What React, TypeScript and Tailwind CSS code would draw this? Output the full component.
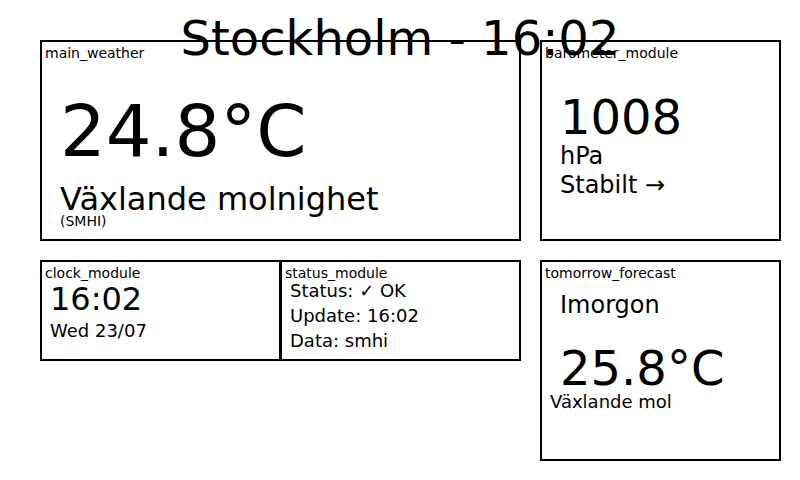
const font = "font-['DejaVu_Sans',sans-serif]";

const Label = ({ text }: { text: string }) => (
  <div className="ml-[3px] mt-[4px] text-[14px] leading-none">{text}</div>
);

const App = () => {
  return (
    <div className={`relative w-[800px] h-[480px] bg-white text-black overflow-hidden ${font}`}>
      {/* title sits on top of the module frames */}
      <div className="absolute left-0 right-0 top-[14px] text-center text-[48px] leading-none whitespace-nowrap z-10">
        Stockholm - 16:02
      </div>

      <div className="flex pt-[40px] pl-[40px] gap-[19px]">
        {/* left column */}
        <div className="flex flex-col gap-[19px]">
          <div className="w-[481px] h-[201px] border-2 border-black flex flex-col items-start">
            <Label text="main_weather" />
            <div className="ml-[18px] mt-[35px] text-[72px] leading-none">24.8°C</div>
            <div className="ml-[18px] mt-[16px] text-[32px] leading-none">Växlande molnighet</div>
            <div className="ml-[18px] -mt-[1px] text-[14px] leading-none">(SMHI)</div>
          </div>

          <div className="flex">
            <div className="w-[241px] h-[101px] border-2 border-black flex flex-col items-start">
              <Label text="clock_module" />
              <div className="ml-[8px] mt-[3px] text-[32px] leading-none">16:02</div>
              <div className="ml-[8px] mt-[7px] text-[18px] leading-none">Wed 23/07</div>
            </div>
            <div className="-ml-px w-[241px] h-[101px] border-2 border-black flex flex-col items-start">
              <Label text="status_module" />
              <div className="ml-[8px] mt-[2px] text-[18px] leading-none">Status: ✓ OK</div>
              <div className="ml-[8px] mt-[7px] text-[18px] leading-none">Update: 16:02</div>
              <div className="ml-[8px] mt-[7px] text-[18px] leading-none">Data: smhi</div>
            </div>
          </div>
        </div>

        {/* right column */}
        <div className="flex flex-col gap-[19px]">
          <div className="w-[241px] h-[201px] border-2 border-black flex flex-col items-start">
            <Label text="barometer_module" />
            <div className="ml-[18px] mt-[33px] text-[48px] leading-none">1008</div>
            <div className="ml-[18px] mt-[3px] text-[24px] leading-none">hPa</div>
            <div className="ml-[18px] mt-[5px] text-[24px] leading-none">Stabilt →</div>
          </div>

          <div className="w-[241px] h-[201px] border-2 border-black flex flex-col items-start">
            <Label text="tomorrow_forecast" />
            <div className="ml-[18px] mt-[13px] text-[24px] leading-none">Imorgon</div>
            <div className="ml-[18px] mt-[27px] text-[48px] leading-none">25.8°C</div>
            <div className="ml-[8px] mt-[1px] text-[18px] leading-none">Växlande mol</div>
          </div>
        </div>
      </div>
    </div>
  );
};

export default App;
